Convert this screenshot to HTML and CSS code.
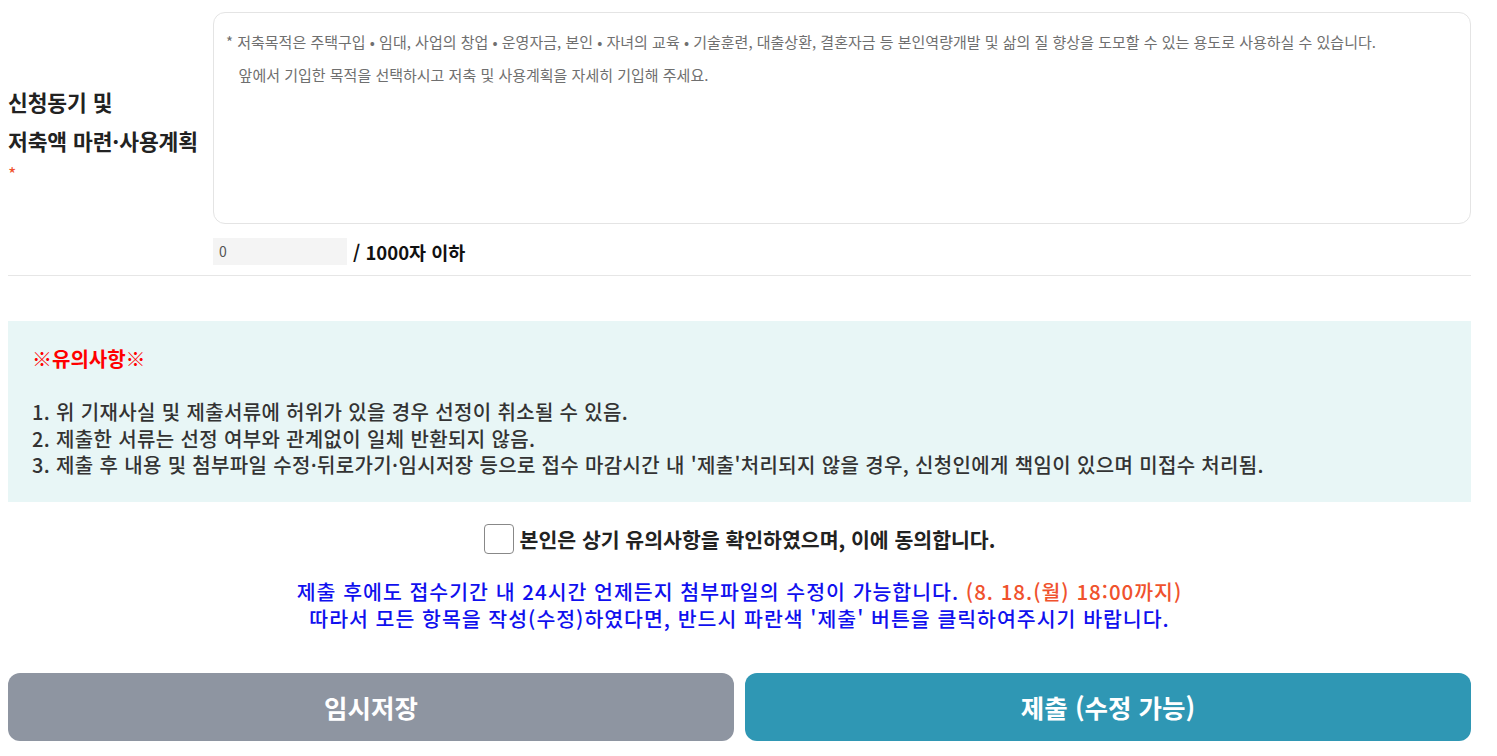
FILE: index.html
```html
<!DOCTYPE html>
<html lang="ko">
<head>
<meta charset="utf-8">
<link rel="stylesheet" href="styles.css">
</head>
<body>
<div class="page">
  <div class="form-row">
    <div class="label">
      <div class="label-text">신청동기 및<br>저축액 마련·사용계획</div>
      <div class="req">*</div>
    </div>
    <div class="field">
      <textarea class="ta" placeholder="* 저축목적은 주택구입 • 임대, 사업의 창업 • 운영자금, 본인 • 자녀의 교육 • 기술훈련, 대출상환, 결혼자금 등 본인역량개발 및 삶의 질 향상을 도모할 수 있는 용도로 사용하실 수 있습니다.&#10;   앞에서 기입한 목적을 선택하시고 저축 및 사용계획을 자세히 기입해 주세요."></textarea>
      <div class="counter">
        <div class="count-box">0</div>
        <span class="count-text">/ 1000자 이하</span>
      </div>
    </div>
  </div>

  <div class="notice">
    <div class="notice-title">※유의사항※</div>
    <ol class="notice-list">
      <li>1. 위 기재사실 및 제출서류에 허위가 있을 경우 선정이 취소될 수 있음.</li>
      <li>2. 제출한 서류는 선정 여부와 관계없이 일체 반환되지 않음.</li>
      <li>3. 제출 후 내용 및 첨부파일 수정·뒤로가기·임시저장 등으로 접수 마감시간 내 '제출'처리되지 않을 경우, 신청인에게 책임이 있으며 미접수 처리됨.</li>
    </ol>
  </div>

  <label class="agree">
    <span class="box"></span>
    <span class="agree-text">본인은 상기 유의사항을 확인하였으며, 이에 동의합니다.</span>
  </label>

  <div class="info">
    <div>제출 후에도 접수기간 내 24시간 언제든지 첨부파일의 수정이 가능합니다. <span class="orange">(8. 18.(월) 18:00까지)</span></div>
    <div>따라서 모든 항목을 작성(수정)하였다면, 반드시 파란색 '제출' 버튼을 클릭하여주시기 바랍니다.</div>
  </div>

  <div class="buttons">
    <button class="btn btn-gray">임시저장</button>
    <button class="btn btn-blue">제출 (수정 가능)</button>
  </div>
</div>
</body>
</html>
```

FILE: styles.css
```css
* { box-sizing: border-box; }
html, body { margin: 0; padding: 0; background: #fff; }
body {
  font-family: "Noto Sans CJK KR", "Noto Sans", sans-serif;
  color: #222;
}
.page {
  padding: 12px 26px 0 8px;
}
.form-row {
  display: flex;
  border-bottom: 1px solid #e6e6e6;
  padding-bottom: 10px;
}
.label {
  width: 205px;
  flex: none;
  display: flex;
  flex-direction: column;
  justify-content: center;
  padding-bottom: 14px;
}
.label-text {
  font-size: 21.5px;
  font-weight: 700;
  line-height: 39px;
  letter-spacing: -0.1px;
  color: #222;
  white-space: nowrap;
}
.req {
  color: #f0522d;
  font-size: 18px;
  line-height: 18px;
  margin-top: 4px;
}
.field {
  flex: 1;
  min-width: 0;
}
.ta {
  display: block;
  width: 100%;
  height: 212px;
  border: 1px solid #e4e4e4;
  border-radius: 12px;
  padding: 12px 12px;
  font-family: "Noto Sans CJK KR", "Noto Sans", sans-serif;
  font-size: 15px;
  line-height: 33px;
  letter-spacing: 0;
  resize: none;
  outline: none;
}
.ta::placeholder { color: #6f6f6f; }
.counter {
  display: flex;
  align-items: center;
  margin-top: 14px;
}
.count-box {
  width: 134px;
  height: 27px;
  background: #f4f4f4;
  font-size: 14px;
  color: #555;
  line-height: 27px;
  padding-left: 6px;
}
.count-text {
  margin-left: 6px;
  font-size: 18.5px;
  font-weight: 700;
  color: #111;
}
.notice {
  margin-top: 45px;
  background: #e8f6f6;
  padding: 20px 24px 23px;
}
.notice-title {
  color: #f00;
  font-size: 20px;
  font-weight: 700;
  line-height: 36px;
}
.notice-list {
  list-style: none;
  margin: 22px 0 0;
  padding: 0;
  font-size: 20px;
  line-height: 26.5px;
  font-weight: 500;
  color: #333;
  letter-spacing: 0.35px;
}
.agree {
  display: flex;
  justify-content: center;
  align-items: center;
  gap: 6px;
  margin-top: 22px;
}
.box {
  width: 30px;
  height: 30px;
  border: 1px solid #888;
  border-radius: 4px;
  background: #fff;
}
.agree-text {
  font-size: 20.5px;
  font-weight: 700;
  color: #222;
}
.info {
  margin-top: 24px;
  text-align: center;
  color: #1010ee;
  font-size: 20.5px;
  font-weight: 500;
  line-height: 27px;
  letter-spacing: 1px;
}
.orange { color: #f0522d; }
.buttons {
  display: flex;
  gap: 11px;
  margin-top: 41px;
}
.btn {
  flex: 1;
  height: 68px;
  border: none;
  border-radius: 12px;
  color: #fff;
  font-family: "Noto Sans CJK KR", "Noto Sans", sans-serif;
  font-size: 25.5px;
  font-weight: 700;
}
.btn-gray { background: #8e95a1; }
.btn-blue { background: #2f97b4; }
```
